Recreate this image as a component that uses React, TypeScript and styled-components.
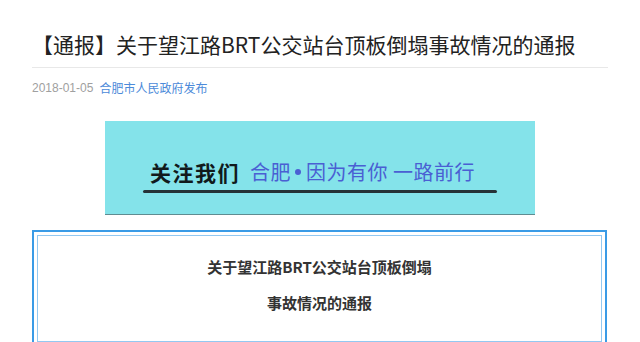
import React from "react";
import styled, { createGlobalStyle } from "styled-components";

const GlobalStyle = createGlobalStyle`
  html, body {
    margin: 0;
    padding: 0;
    background: #ffffff;
  }
  body {
    font-family: "Noto Sans CJK SC", "Liberation Sans", sans-serif;
  }
`;

const Page = styled.div`
  width: 640px;
  box-sizing: border-box;
  padding: 29px 32px 0;
  display: flex;
  flex-direction: column;
`;

const Header = styled.div`
  padding-bottom: 8px;
  border-bottom: 1px solid #e8e8e8;
`;

const Title = styled.h1`
  margin: 0;
  font-family: "Noto Sans CJK SC", "Liberation Sans", sans-serif;
  font-weight: 400;
  font-size: 21px;
  line-height: 30px;
  color: #222222;
  white-space: nowrap;
`;

const Meta = styled.div`
  margin-top: 10px;
  display: flex;
  align-items: center;
  gap: 6px;
  font-size: 12px;
  line-height: 20px;
`;

const DateText = styled.span`
  font-family: "Liberation Sans", "Noto Sans CJK SC", sans-serif;
  color: #a0a0a0;
`;

const Source = styled.a`
  font-family: "Noto Sans CJK SC", sans-serif;
  color: #4c8ad9;
  text-decoration: none;
`;

const Banner = styled.div`
  align-self: center;
  margin-top: 23px;
  width: 430px;
  height: 94px;
  box-sizing: border-box;
  background: #84e3ea;
  border-bottom: 1px solid #5f8c91;
  display: flex;
  flex-direction: column;
  align-items: flex-start;
  padding-left: 38px;
`;

const Slogan = styled.div`
  margin-top: 37px;
  padding-left: 7px;
  display: flex;
  align-items: center;
  gap: 10px;
  line-height: 28px;
  font-size: 20px;
  white-space: nowrap;
`;

const Follow = styled.span`
  font-weight: 700;
  font-size: 21px;
  color: #111a1c;
  letter-spacing: 1.5px;
`;

const Motto = styled.span`
  display: inline-flex;
  align-items: center;
  font-weight: 400;
  color: #4a5fd3;
  letter-spacing: 0.5px;
`;

const Bullet = styled.span`
  display: inline-block;
  width: 6px;
  height: 6px;
  border-radius: 50%;
  background: #4a5fd3;
  margin: 0 5px 0 4px;
`;

const Underline = styled.div`
  margin-top: 4px;
  width: 354px;
  height: 3px;
  background: #263338;
  border-radius: 2px;
`;

const Frame = styled.div`
  margin-top: 15px;
  width: 575px;
  box-sizing: border-box;
  border: 2px solid #3a9be6;
  padding: 3px;
`;

const FrameInner = styled.div`
  border: 1px solid #93c8f1;
  padding-top: 13px;
  padding-bottom: 20px;
  display: flex;
  flex-direction: column;
  align-items: center;
`;

const FrameLine = styled.div`
  font-family: "Noto Sans CJK SC", "Liberation Sans", sans-serif;
  font-weight: 700;
  font-size: 15px;
  line-height: 36px;
  color: #333333;
  white-space: nowrap;
`;

export default function App() {
  return (
    <>
      <GlobalStyle />
      <Page>
        <Header>
          <Title>【通报】关于望江路BRT公交站台顶板倒塌事故情况的通报</Title>
        </Header>
        <Meta>
          <DateText>2018-01-05</DateText>
          <Source href="#">合肥市人民政府发布</Source>
        </Meta>
        <Banner>
          <Slogan>
            <Follow>关注我们</Follow>
            <Motto>
              合肥
              <Bullet />
              因为有你 一路前行
            </Motto>
          </Slogan>
          <Underline />
        </Banner>
        <Frame>
          <FrameInner>
            <FrameLine>关于望江路BRT公交站台顶板倒塌</FrameLine>
            <FrameLine>事故情况的通报</FrameLine>
          </FrameInner>
        </Frame>
      </Page>
    </>
  );
}
